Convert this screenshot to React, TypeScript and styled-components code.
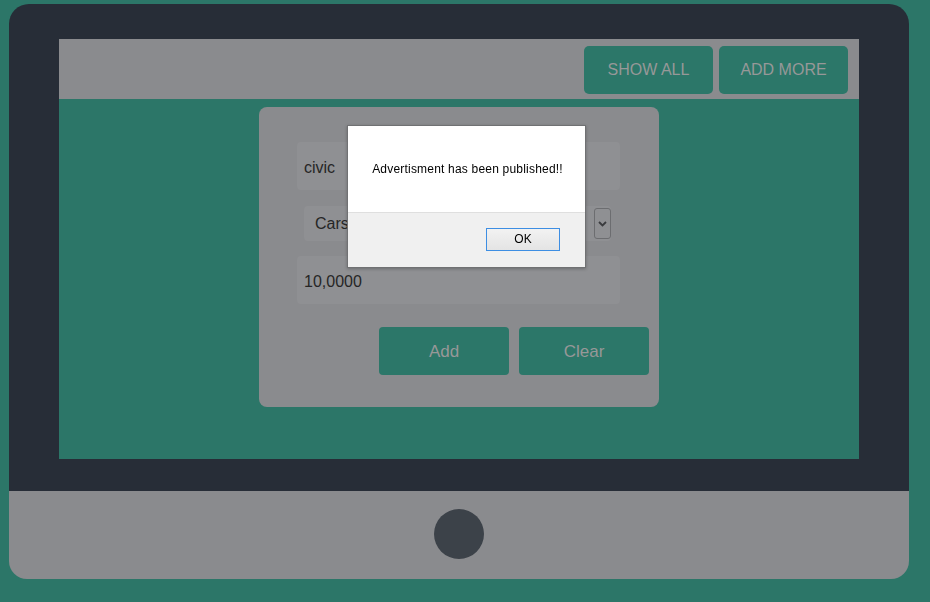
import React from "react";
import styled, { createGlobalStyle } from "styled-components";

const Global = createGlobalStyle`
  html, body { margin: 0; padding: 0; }
  body {
    background: #2c7668;
    font-family: "Liberation Sans", Arial, sans-serif;
    width: 930px;
    height: 602px;
    overflow: hidden;
  }
`;

const Page = styled.div`
  padding: 4px 0 0 9px;
`;

const Monitor = styled.div`
  width: 900px;
  display: flex;
  flex-direction: column;
`;

const Frame = styled.div`
  background: #272d37;
  border-radius: 20px 20px 0 0;
  padding: 35px 50px 32px;
`;

const Screen = styled.div`
  width: 800px;
  height: 420px;
  background: #2c7668;
  display: flex;
  flex-direction: column;
`;

const Header = styled.div`
  height: 60px;
  background: #8a8b8e;
  display: flex;
  justify-content: flex-end;
  align-items: center;
  gap: 6px;
  padding-right: 11px;
  box-sizing: border-box;
`;

const NavButton = styled.button`
  width: 129px;
  height: 48px;
  border: none;
  border-radius: 5px;
  background: #2c7769;
  color: #979898;
  font-family: "Liberation Sans", Tahoma, sans-serif;
  font-size: 16px;
  padding: 0;
  margin-top: 2px;
`;

const Body = styled.div`
  flex: 1;
  display: flex;
  justify-content: center;
  padding-top: 8px;
`;

const Card = styled.div`
  width: 400px;
  height: 300px;
  box-sizing: border-box;
  background: #8a8b8e;
  border-radius: 8px;
  padding: 35px 10px 0 38px;
  display: flex;
  flex-direction: column;
`;

const Input = styled.div<{ $mt?: number }>`
  width: 323px;
  height: 48px;
  box-sizing: border-box;
  margin-top: ${(p) => p.$mt ?? 0}px;
  background: #8f9093;
  border-radius: 4px;
  padding: 3px 0 0 7px;
  display: flex;
  align-items: center;
  font-size: 16px;
  color: #262626;
`;

const Select = styled.div`
  margin: 16px 0 0 7px;
  width: 307px;
  height: 35px;
  box-sizing: border-box;
  background: #8f9093;
  border-radius: 4px;
  padding: 0 0 0 11px;
  display: flex;
  align-items: center;
  justify-content: space-between;
  font-size: 16px;
  color: #262626;
`;

const ArrowBox = styled.div`
  width: 17px;
  height: 31px;
  box-sizing: border-box;
  border: 1px solid #6c6d70;
  border-radius: 3px;
  display: flex;
  align-items: center;
  justify-content: center;
`;

const Actions = styled.div`
  margin-top: 23px;
  display: flex;
  justify-content: flex-end;
  gap: 10px;
`;

const ActionButton = styled.button`
  width: 130px;
  height: 48px;
  border: none;
  border-radius: 4px;
  background: #2c7769;
  color: #979898;
  font-family: "Liberation Sans", Tahoma, sans-serif;
  font-size: 17px;
  padding: 2px 0 0;
`;

const Stand = styled.div`
  height: 88px;
  background: #8a8b8e;
  border-radius: 0 0 18px 18px;
  display: flex;
  align-items: center;
  justify-content: center;
`;

const HomeButton = styled.div`
  width: 50px;
  height: 50px;
  border-radius: 50%;
  background: #3c4249;
  margin-bottom: 2px;
`;

const Dialog = styled.div`
  position: fixed;
  left: 347px;
  top: 125px;
  width: 239px;
  height: 143px;
  box-sizing: border-box;
  border: 1px solid #707173;
  background: #f0f0f0;
  display: flex;
  flex-direction: column;
  box-shadow: 0 1px 3px rgba(0, 0, 0, 0.25);
`;

const Message = styled.div`
  height: 86px;
  background: #ffffff;
  border-bottom: 1px solid #dfdfdf;
  display: flex;
  align-items: center;
  justify-content: center;
  font-family: "Liberation Sans", Arial, sans-serif;
  font-size: 12px;
  letter-spacing: 0.2px;
  color: #000;
  padding-left: 2px;
`;

const DialogFooter = styled.div`
  flex: 1;
  display: flex;
  justify-content: flex-end;
  align-items: center;
  padding: 0 25px 2px 0;
`;

const OkButton = styled.button`
  width: 74px;
  height: 23px;
  box-sizing: border-box;
  border: 1px solid #3d8ee3;
  background: linear-gradient(#f2f2f2, #e4e4e4);
  font-family: "Liberation Sans", Arial, sans-serif;
  font-size: 12px;
  color: #000;
  padding: 0;
`;

export default function App() {
  return (
    <>
      <Global />
      <Page>
        <Monitor>
          <Frame>
            <Screen>
              <Header>
                <NavButton>SHOW ALL</NavButton>
                <NavButton>ADD MORE</NavButton>
              </Header>
              <Body>
                <Card>
                  <Input>civic</Input>
                  <Select>
                    <span>Cars</span>
                    <ArrowBox>
                      <svg width="9" height="6" viewBox="0 0 9 6">
                        <path d="M1 1 L4.5 4.5 L8 1" fill="none" stroke="#3a3b3e" strokeWidth="1.8" />
                      </svg>
                    </ArrowBox>
                  </Select>
                  <Input $mt={15}>10,0000</Input>
                  <Actions>
                    <ActionButton>Add</ActionButton>
                    <ActionButton>Clear</ActionButton>
                  </Actions>
                </Card>
              </Body>
            </Screen>
          </Frame>
          <Stand>
            <HomeButton />
          </Stand>
        </Monitor>
      </Page>
      <Dialog role="alertdialog">
        <Message>Advertisment has been published!!</Message>
        <DialogFooter>
          <OkButton>OK</OkButton>
        </DialogFooter>
      </Dialog>
    </>
  );
}
